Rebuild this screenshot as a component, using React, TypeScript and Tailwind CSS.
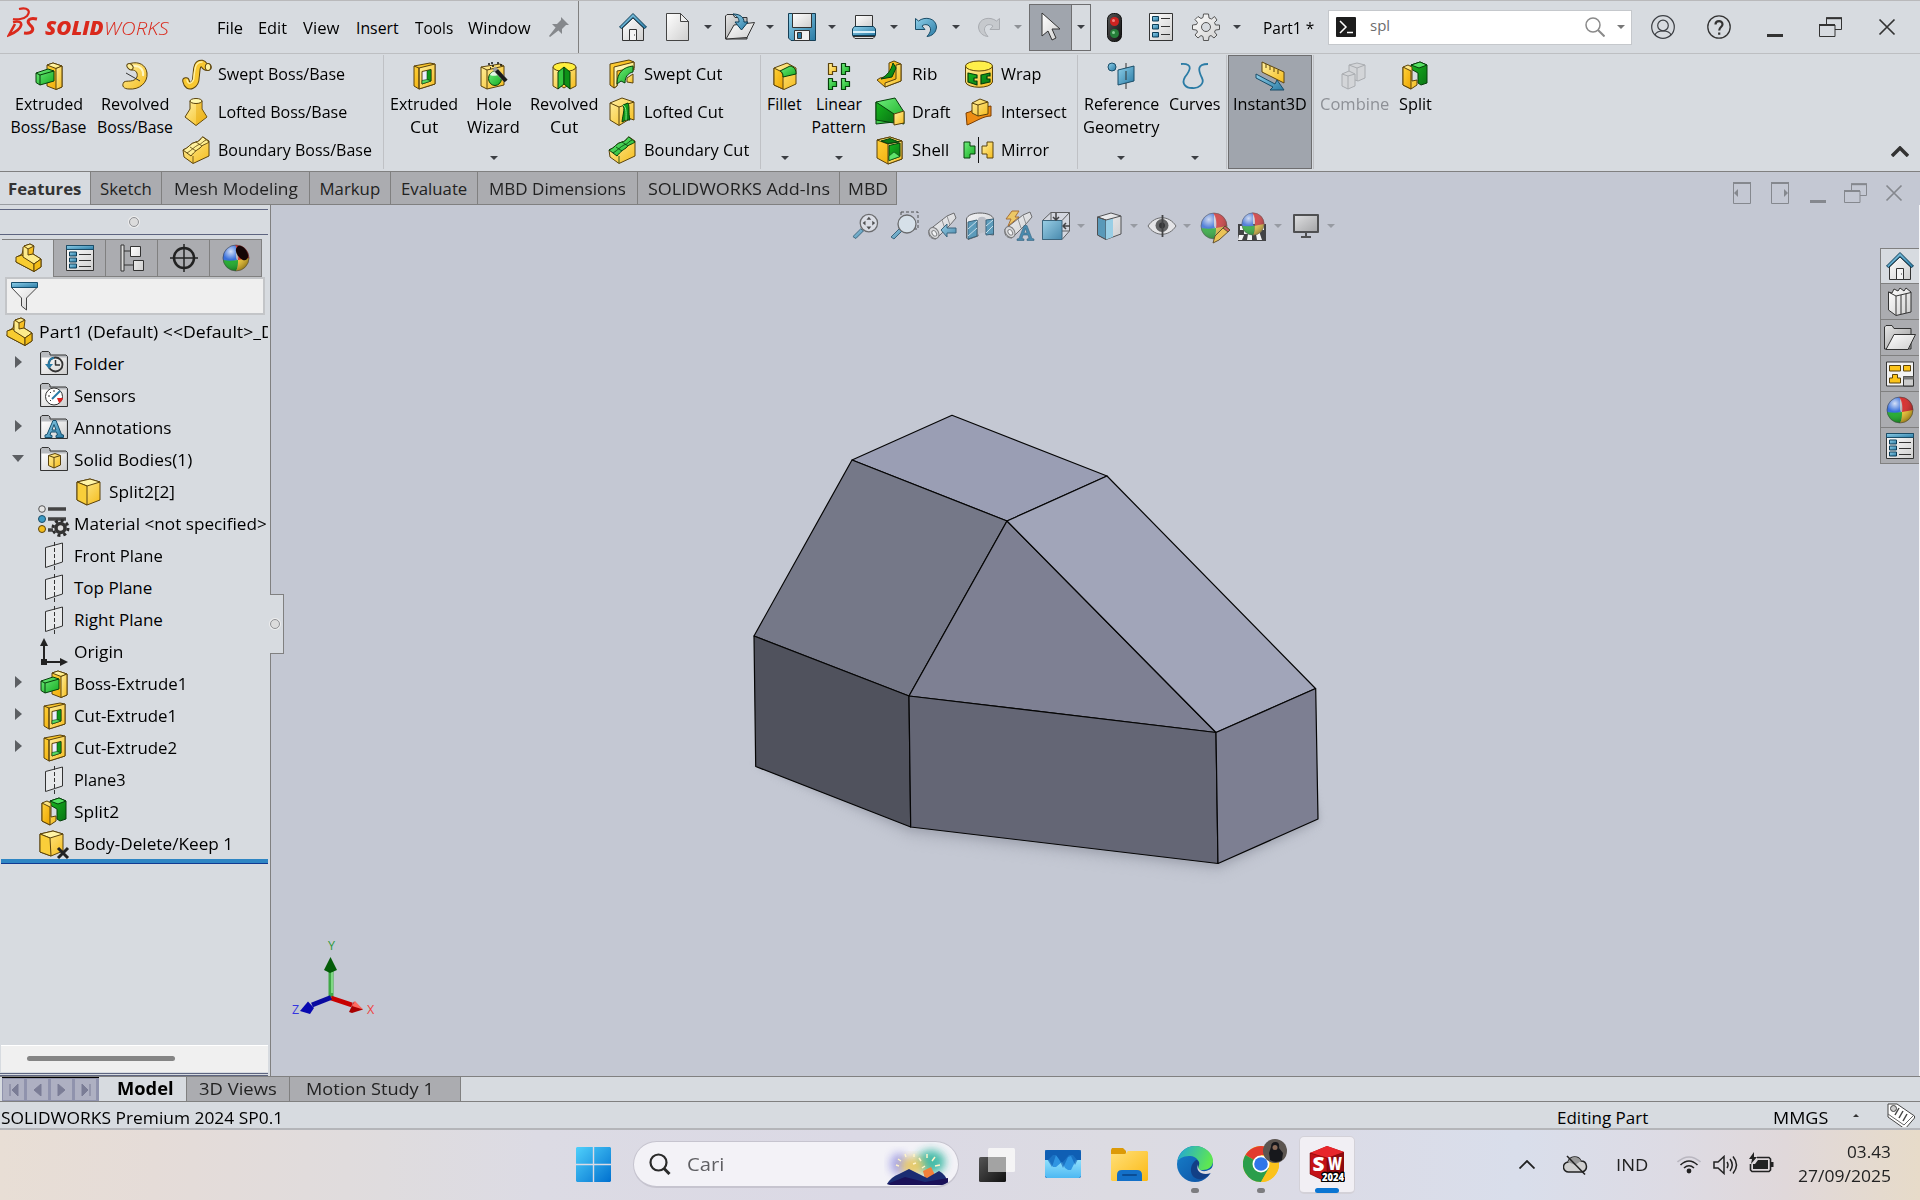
import React, { useLayoutEffect, useRef, useState } from "react";

type Kids = { children?: React.ReactNode };

/* Text set to an exact width, condensed horizontally where needed. */
function T({ w, c = "", children }: Kids & { w: number; c?: string }) {
  const ref = useRef<HTMLSpanElement>(null);
  const [s, setS] = useState(1);
  useLayoutEffect(() => {
    if (ref.current) setS(w / ref.current.offsetWidth);
  }, [w]);
  return (
    <span className={"inline-block shrink-0 whitespace-nowrap text-left " + c} style={{ width: w }}>
      <span ref={ref} className="inline-block origin-left" style={{ transform: `scaleX(${s})` }}>
        {children}
      </span>
    </span>
  );
}

function I({ c = "h-7 w-7", children, vb = "0 0 28 28" }: Kids & { c?: string; vb?: string }) {
  return (
    <svg viewBox={vb} className={"block shrink-0 overflow-visible " + c} fill="none" strokeWidth="1" strokeLinejoin="round">
      {children}
    </svg>
  );
}

function Defs() {
  const g = (id: string, a: string, b: string, x2 = "1", y2 = "1") => (
    <linearGradient id={id} x1="0" y1="0" x2={x2} y2={y2}>
      <stop offset="0" stopColor={a} />
      <stop offset="1" stopColor={b} />
    </linearGradient>
  );
  return (
    <svg className="absolute h-0 w-0">
      <defs>
        {g("gold", "#fff0a0", "#f5bc1c")}
        {g("amber", "#ffd23c", "#eda500")}
        {g("lite", "#fffbd0", "#ffe45a")}
        {g("green", "#6fee7c", "#16ab22")}
        {g("dgreen", "#16b81e", "#0a7414")}
        {g("blue", "#8fd0ea", "#2a7ba5")}
        {g("gray", "#ffffff", "#cfcfcf")}
        {g("dgray", "#e6e6e6", "#9c9c9c")}
        {g("dark", "#555555", "#111111")}
        {g("win", "#4fd0fb", "#0070cf")}
        {g("fold", "#ffe07a", "#fbb914")}
        {g("edgeA", "#1fa5dc", "#5ee653", "1", "0.3")}
        {g("edgeB", "#1782cc", "#0c4da0")}
        {g("sea", "#8fe0fd", "#4db8f2", "0", "1")}
        <radialGradient id="shine" cx="0.3" cy="0.25" r="0.8">
          <stop offset="0" stopColor="#fff" stopOpacity="0.8" />
          <stop offset="0.4" stopColor="#fff" stopOpacity="0.08" />
          <stop offset="1" stopColor="#000" stopOpacity="0.35" />
        </radialGradient>
        <filter id="soft" x="-30%" y="-30%" width="160%" height="160%">
          <feGaussianBlur stdDeviation="4" />
        </filter>
        <filter id="soft2" x="-30%" y="-60%" width="160%" height="220%">
          <feGaussianBlur stdDeviation="7" />
        </filter>
      </defs>
    </svg>
  );
}

const GO = "#5b430c";
const GN = "#063f0b";
const DK = "#333";

const Caret = ({ c = "text-[#3c3f44]" }: { c?: string }) => (
  <svg viewBox="0 0 8 4" className={"block h-1 w-2 shrink-0 " + c}>
    <path d="M0 0H8L4 4Z" fill="currentColor" />
  </svg>
);

/* ---------- feature icons ---------- */
const Extrude = () => (
  <I>
    <path d="M12 3 18 1 27 4V25L21 27.500 12 24Z" fill="url(#amber)" stroke={GO} />
    <path d="M12 3 18 1 27 4 21 6.500Z" fill="url(#lite)" stroke={GO} />
    <path d="M21 6.500 27 4V25L21 27.500Z" fill="url(#gold)" stroke={GO} />
    <path d="M1 11 13 7 19 9V19L5 23 1 20.500Z" fill="url(#green)" stroke={GN} />
    <path d="M1 11 5 13V23M5 13 19 9" stroke={GN} />
  </I>
);
const Revolve = () => (
  <I>
    <path d="M9 1.500C18-1 25 3 26 11 27 21 18 28 8 27 3 27 0 24 3 20 6 18 13 21 16 15 17 11 15 8 11 8 7 7 6 3 9 1.500Z" fill="url(#gold)" stroke={GO} />
    <path d="M12 4C20 3 23 9 22 14" stroke="#fff6c0" strokeWidth="2" />
    <ellipse cx="9" cy="4.700" rx="3.500" ry="2.500" fill="#fff09a" stroke={GO} transform="rotate(45 9 4.700)" />
    <path d="M5 11 19 19" stroke="#333" />
  </I>
);
const Sweep = () => (
  <I>
    <path d="M4 21C6 30 14 25 14 17 15 10 14 3 20 3.500 23 4 22 8 26 7" stroke={GO} strokeWidth="7.500" strokeLinecap="round" />
    <path d="M4 21C6 30 14 25 14 17 15 10 14 3 20 3.500 23 4 22 8 26 7" stroke="#f8c832" strokeWidth="5.500" strokeLinecap="round" />
    <path d="M5 20C6 26 12 23 12 16 13 9 13 2 20 2" stroke="#fff0a0" strokeWidth="1.500" strokeLinecap="round" />
    <ellipse cx="26" cy="7" rx="2.800" ry="3.600" fill="#fff3a5" stroke={GO} />
  </I>
);
const Loft = () => (
  <I>
    <path d="M8 3V11L3 19 14 27.500 25 19 20 11V3Z" fill="url(#gold)" stroke={GO} />
    <path d="M14 6V27L25 19 20 11V3Z" fill="#e0a000" opacity="0.4" />
    <ellipse cx="14" cy="3" rx="6" ry="2.500" fill="#fff9b0" stroke={GO} />
  </I>
);
const Boundary = ({ cut = false }: { cut?: boolean }) => (
  <I>
    <path d="M1 14C7 12 8 7 14 6 19 5 19 1 21 1L27 5V20L11 27.500 2 21Z" fill="url(#gold)" stroke={GO} />
    <path d="M1 14C7 12 8 7 14 6 19 5 19 1 21 1L27 6C23 9 21 8 18 12 15 14 13 15 9 20Z" fill={cut ? "url(#green)" : "url(#lite)"} stroke={cut ? GN : GO} />
    <path d="M5 17C10 14 12 11 16 9 20 8 21 5 24 4M8 11 14 15M14 6 20 10M11 20V27" stroke={cut ? GN : GO} strokeWidth="0.800" />
  </I>
);
const ExtCut = () => (
  <I>
    <path d="M4 4 20 1 25 2V22L9 27 4 24Z" fill="url(#amber)" stroke={GO} />
    <path d="M9 6 25 2V22L9 27Z" fill="url(#gold)" stroke={GO} />
    <path d="M4 4 9 6V27" stroke={GO} />
    <path d="M12 9.500 21 7.500V19L12 22Z" fill="#eef" stroke={GO} />
    <path d="M17 9 21 7.500V19L17 17.500Z" fill="#11991c" stroke={GN} strokeWidth="0.600" />
    <path d="M12 22V18.500L17 17.500 21 19Z" fill="#57d963" stroke={GN} strokeWidth="0.600" />
  </I>
);
const Hole = () => (
  <I>
    <path d="M1 5 20 2 24 4V23L7 27 1 24Z" fill="url(#gold)" stroke={GO} />
    <path d="M1 5 7 8V27M7 8 24 4" stroke={GO} />
    <ellipse cx="15" cy="16.500" rx="6.500" ry="7" fill="url(#green)" stroke={GN} />
    <path d="M10 13C15 15 20 13 19 11 15 8 11 10 10 13Z" fill="#e3f6e5" />
    <path d="M14 6 26 19" stroke="#999" strokeWidth="4.500" />
    <path d="M16.500 8.500 26 19" stroke="#1a1a1a" strokeWidth="4" />
    <path d="M8 2h2M12 0v2M17 1h2M14 4h-2M20 3h2M10 6h1" stroke="#111" strokeWidth="1.500" />
  </I>
);
const RevCut = () => (
  <I>
    <path d="M3 5V24L8 27 11 24 14 26 17 24 20 27 26 24V5Z" fill="url(#gold)" stroke={GO} />
    <ellipse cx="14.500" cy="5" rx="11.500" ry="4.500" fill="#ffef3c" stroke={GO} />
    <path d="M14 5 8 10V27L14 22Z" fill="#35c740" stroke={GN} />
    <path d="M14 5 20 10V27L14 22Z" fill="#0d9118" stroke={GN} />
  </I>
);
const SweptCut = () => (
  <I>
    <path d="M2 4 21 0 26 2V10C18 9 10 14 9 26L6 28 2 25Z" fill="url(#amber)" stroke={GO} />
    <path d="M6 7 26 2V8L9 11V26L6 28Z" fill="url(#lite)" stroke={GO} />
    <path d="M9 24C9 12 16 7 25 6V12C20 13 17 17 17 23L13 21Z" fill="url(#green)" stroke={GN} />
    <path d="M19 18 25 14V23L19 22Z" fill="url(#gold)" stroke={GO} />
  </I>
);
const LoftCut = () => (
  <I>
    <path d="M2 5 14 0 26 4V22L20 20V22L11 27.500 2 22Z" fill="url(#gold)" stroke={GO} />
    <path d="M2 5 11 9V27M11 9 26 4" stroke={GO} />
    <path d="M15 7C17 12 15 15 14 24L18 22 22 22C20 14 22 9 20 5Z" fill="url(#dgreen)" stroke={GN} />
    <path d="M15 7C19 9 18 17 18 22" stroke="#7ff08a" />
  </I>
);
const Fillet = () => (
  <I>
    <path d="M3 6 16 1 25 6V22L13 27.500 3 23Z" fill="url(#gold)" stroke={GO} />
    <path d="M3 6 9 9C12 11 12 15 12 15V27L3 23Z" fill="url(#amber)" stroke={GO} />
    <path d="M9 9 19 4C24 5 25 8 25 12L12 15C12 11 11 10 9 9Z" fill="url(#green)" stroke={GN} />
  </I>
);
const Patt = ({ x, y, f, s }: { x: number; y: number; f: string; s: string }) => (
  <path d={`M${x} ${y}h4v3h4v5h-4v3h-4Z`} fill={f} stroke={s} strokeWidth="1.200" />
);
const Linear = () => (
  <I>
    <Patt x={3.500} y={1.500} f="url(#gold)" s={GO} />
    <Patt x={16.500} y={1.500} f="url(#green)" s={GN} />
    <Patt x={3.500} y={16.500} f="url(#green)" s={GN} />
    <Patt x={16.500} y={16.500} f="url(#green)" s={GN} />
  </I>
);
const Rib = () => (
  <I>
    <path d="M13 3 18 1 25 4V21L9 27 1 20 4 18 13 16Z" fill="url(#amber)" stroke={GO} />
    <path d="M20 5 25 4V21L9 27V23L20 19Z" fill="url(#gold)" stroke={GO} />
    <path d="M17 3C15 11 11 15 5 19L16 17 20 8Z" fill="url(#dgreen)" stroke={GN} />
  </I>
);
const Draft = () => (
  <I>
    <path d="M0 4 19 0 28 14V26L18 24 0 26Z" fill="url(#green)" stroke={GN} />
    <path d="M0 4 18 16V25L0 22Z" fill="url(#dgreen)" stroke={GN} />
    <path d="M18 16 28 13V25L18 27Z" fill="url(#gold)" stroke={GO} />
  </I>
);
const Shell = () => (
  <I>
    <path d="M1 4 14 1 26 5V23L12 28 1 22Z" fill="url(#amber)" stroke={GO} />
    <path d="M1 4 12 8 26 5 14 1Z" fill="#ffe873" stroke={GO} />
    <path d="M12 8 26 5V23L12 28Z" fill="url(#gold)" stroke={GO} />
    <path d="M5 5 14 2.500 23 6 12 7.500Z" fill="#0b7a15" stroke={GN} />
    <path d="M13 9.500 24 7V20.500L13 24.500Z" fill="url(#dgreen)" stroke={GN} />
    <path d="M13 24.500V20L18 16 24 20.500Z" fill="#5fe46b" stroke={GN} strokeWidth="0.600" />
  </I>
);
const Wrap = () => (
  <I>
    <path d="M0.500 6V22C2 29 26 29 27.500 22V6Z" fill="url(#gold)" stroke={GO} />
    <ellipse cx="14" cy="6" rx="13.500" ry="5" fill="#ffef4a" stroke={GO} />
    <path d="M3 13 12 15V18H9V21H12V25L3 22ZM25 13 16 15V24L25 22V19H22V16H25Z" fill="url(#dgreen)" stroke={GN} strokeWidth="1.200" />
  </I>
);
const Intersect = () => (
  <I>
    <path d="M1 15C7 14 9 10 14 10L26 8V18C18 18 10 24 2 27Z" fill="#ee8c14" stroke="#7a3c00" />
    <path d="M7 5 15 1 23 4V16L13 18 7 15Z" fill="url(#gold)" stroke={GO} />
    <path d="M7 5 13 7V18M13 7 23 4" stroke={GO} />
  </I>
);
const Mirror = () => (
  <I>
    <path d="M-1 6H5V10H10V18H5V22H-1Z" fill="url(#green)" stroke={GN} />
    <path d="M28 6H22V10H17V18H22V22H28Z" fill="url(#gold)" stroke={GO} />
    <path d="M13.500 1V27" stroke="#111" />
  </I>
);
const RefGeo = () => (
  <I>
    <circle cx="5" cy="5" r="4" fill="url(#blue)" stroke="#1b4d68" />
    <path d="M11 8 27 4V19L11 23Z" fill="url(#blue)" stroke="#1b4d68" />
    <path d="M19 1V6M19 9V18M19 21V27" stroke="#333" />
  </I>
);
const Curves = () => (
  <I>
    <path d="M0 2C14 1 8 10 4 15 0 22 5 26 11 26 17 27 24 22 21 16 17 8 16 2 27 2" stroke="#2a7ba5" strokeWidth="1.800" />
  </I>
);
const Instant = () => (
  <I>
    <path d="M6 0 28 10V21L6 10Z" fill="url(#gold)" stroke={GO} />
    <path d="M10 2v4M14 4v4M18 6v4M22 8v4" stroke={GO} />
    <path d="M0 12 19 22 21 18 28 28 14 28 17 25 0 16Z" fill="url(#blue)" stroke="#1b4d68" />
  </I>
);
const Combine = () => (
  <I>
    <g fill="#d3d5d8" stroke="#a9acb0">
      <path d="M9 3 17 1 25 3V16L18 19 9 16Z" />
      <path d="M9 3 17 6 25 3M17 6V19" />
      <path d="M2 12 9 9 15 12V24L8 27 2 24Z" />
      <path d="M2 12 8 14 15 12M8 14V27" />
    </g>
  </I>
);
const SplitI = () => (
  <I>
    <path d="M10 3 19 0 26 3V21L20 23 17 21V11L10 7Z" fill="url(#dgreen)" stroke={GN} />
    <path d="M10 3 19 0 26 3 18 6Z" fill="#55e062" stroke={GN} />
    <path d="M2 5 7 3 11 5V19L16 18V23L10 27 2 23Z" fill="url(#gold)" stroke={GO} />
    <path d="M2 5 10 9V27L2 23Z" fill="url(#amber)" stroke={GO} />
  </I>
);

/* ---------- general icons ---------- */
const House = () => (
  <I>
    <path d="M3.500 15 14 5 24.500 15V27.500H3.500Z" fill="url(#gray)" stroke={DK} />
    <rect x="10.500" y="16.500" width="7" height="11" stroke={DK} fill="#f4f4f4" />
    <path d="M15 22h1" stroke={DK} />
    <path d="M0.500 14 14 0.500 27.500 14 25.500 15.500 14 4.500 2.500 15.500Z" fill="url(#blue)" stroke="#0d3d57" />
  </I>
);
const PropList = ({ top = true }: { top?: boolean }) => (
  <I>
    <rect x="0.500" y="1.500" width="27" height="25" fill="url(#gray)" stroke={DK} />
    {top && <rect x="0.500" y="1.500" width="27" height="4" fill="url(#blue)" stroke="#1b4d68" />}
    {[8, 14, 20].map((y) => (
      <g key={y}>
        <rect x="3.500" y={y} width="7" height="4" fill="url(#blue)" stroke="#0d3d57" />
        <path d={`M13 ${y + 2.500}H25`} stroke={DK} />
      </g>
    ))}
  </I>
);
const Sphere = ({ c = "h-7 w-7" }: { c?: string }) => (
  <I c={c}>
    <path d="M14 14V1A13 13 0 0 0 1 16C5 18 10 18 15 16Z" fill="#2763d8" />
    <path d="M13 1C16 5 17 11 16 16H27A13 13 0 0 0 13 1Z" fill="#d5201f" />
    <path d="M1 16C6 17 11 17 16 16 16 20 16 24 14 27A13 13 0 0 1 1 16Z" fill="#12a81f" />
    <path d="M16 16 27 14A13 13 0 0 1 14 27C16 24 16 20 16 16Z" fill="#f0c427" />
    <circle cx="14" cy="14" r="13" fill="url(#shine)" stroke="#444" strokeWidth="0.600" />
  </I>
);
const PartI = () => (
  <I>
    <path d="M3 13 8 10 10 2 16 0 20 2 19 10 27 15V23L20 27.500 2 18Z" fill="url(#amber)" stroke={GO} />
    <path d="M2 13 8 11 20 20V27.500L2 18Z" fill="#f8cc30" stroke={GO} />
    <path d="M10 2 16 0 20 2 14 5ZM14 5V11L19 10 27 15 20 20 9 13V3" fill="#fdeb8b" stroke={GO} />
    <path d="M20 20 27 15V23L20 27.500Z" fill="#f2bc16" stroke={GO} />
  </I>
);
const Cube = () => (
  <I>
    <path d="M2 4 15 1 25 4V22L12 27 2 22Z" fill="url(#gold)" stroke={GO} />
    <path d="M2 4 12 8 25 4 15 1Z" fill="#fff4a6" stroke={GO} />
    <path d="M2 4 12 8V27L2 22Z" fill="#f9ce3a" stroke={GO} />
  </I>
);
const CubeX = () => (
  <I>
    <path d="M0 4 13 1 23 4V21L11 26 0 22Z" fill="url(#gold)" stroke={GO} />
    <path d="M0 4 10 8 23 4 13 1Z" fill="#fff4a6" stroke={GO} />
    <path d="M0 4 10 8 11 26 0 22Z" fill="#f9ce3a" stroke={GO} />
    <path d="M18 18 28 28M28 18 18 28" stroke="#222" strokeWidth="3" />
  </I>
);
const FolderBox = ({ children }: Kids) => (
  <I>
    <path d="M0.500 6V3L2 1.500H8.500L10 3V5H26L27.500 6.500V24.500H0.500Z" fill="#b9bcc0" stroke={DK} />
    <path d="M1.500 7.500H26.500V24H1.500Z" fill="url(#gray)" />
    {children}
  </I>
);
const Plane = () => (
  <I>
    <path d="M5.500 5.500 22.500 1V20L5.500 25.500Z" fill="#e7e9eb" stroke={DK} />
    <path d="M14.500 0V28" stroke={DK} strokeDasharray="4 2" />
  </I>
);
const Material = () => (
  <I>
    <circle cx="2" cy="-1" r="3.300" fill="#e4e4e4" stroke="#555" />
    <circle cx="2" cy="9" r="3.500" fill="#3c9ac4" stroke="#1b4d68" />
    <circle cx="2" cy="19" r="3.500" fill="#f4bd1b" stroke={GO} />
    <path d="M8 -1H26M8 9H26M8 20H13" stroke="#444" strokeWidth="3.500" />
    <circle cx="20.500" cy="18" r="7.500" stroke="#2c2c2c" strokeWidth="3" strokeDasharray="3 2.890" />
    <circle cx="20.500" cy="18" r="4.500" stroke="#333" strokeWidth="3.500" fill="#ddd" />
  </I>
);
const Origin = () => (
  <I>
    <path d="M4 24V6M4 24H22" stroke="#222" strokeWidth="2" />
    <path d="M4 0 8 8H0ZM28 24 20 28V20ZM1 21H7V27H1Z" fill="#222" />
  </I>
);
const OpenFolder = () => (
  <I c="h-7 w-8" vb="0 0 32 28">
    <path d="M0.500 25V3L2 1.500H8L10 4.500H27V25Z" fill="url(#dgray)" stroke={DK} />
    <path d="M2 25.500 10 10.500H31.500L24 25.500Z" fill="url(#gray)" stroke={DK} />
  </I>
);
const Restore = ({ c }: { c: string }) => (
  <I c={"h-5 w-[23px] " + c} vb="0 0 23 20">
    <path d="M7.500 7V1H22.500V12.500H16" stroke="currentColor" />
    <path d="M7 1.200H23" stroke="currentColor" strokeWidth="2" />
    <rect x="0.500" y="8" width="15.500" height="11.500" stroke="currentColor" />
    <path d="M0 8H16" stroke="currentColor" strokeWidth="2" />
  </I>
);
const Cross = ({ c }: { c: string }) => (
  <I c={"h-4 w-4 " + c} vb="0 0 16 16">
    <path d="M0.500 0.500 15.500 15.500M15.500 0.500 0.500 15.500" stroke="currentColor" strokeWidth="1.700" />
  </I>
);
const Scope = () => (
  <>
    <path d="M1 18 19 4 26 1 28 6 22 13 8 27C2 27 0 23 1 18Z" fill="url(#gray)" stroke="#555" />
    <path d="M19 4 22 13M14 8 17 17" stroke="#888" />
    <ellipse cx="6" cy="21" rx="4.500" ry="6" transform="rotate(-35 6 21)" fill="#ddd" stroke="#666" />
    <ellipse cx="6" cy="21.500" rx="2" ry="3" transform="rotate(-35 6 21)" fill="#fff" stroke="#777" />
  </>
);

/* ---------- title bar ---------- */
function TitleBar() {
  const menu: [string, number, string][] = [
    ["File", 26, "ml-[48px] mt-[2px]"],
    ["Edit", 29, "ml-[15px] mt-[2px]"],
    ["View", 37, "ml-[16px] mt-[2px]"],
    ["Insert", 43, "ml-[16px] mt-[2px]"],
    ["Tools", 38, "ml-[16px] mt-[2px]"],
    ["Window", 63, "ml-[15px] mt-[2px]"],
  ];
  return (
    <header className="flex h-[54px] items-center border-t border-b border-t-[#b9b9bb] border-b-[#bdbfc2] bg-[#d7dbe0]">
      <svg viewBox="0 0 32 32" className="ml-[7px] h-8 w-8 shrink-0 -mt-2" fill="none" stroke="#da291c" strokeWidth="2.600">
        <path d="M12 2C21 0 24 4 20 9 17 12 10 13 6 12" strokeWidth="2.200" />
        <path d="M6 15C18 12 17 22 2 28L8 17" />
        <path d="M30 12C22 10 19 14 23 18 28 22 26 27 17 26" strokeWidth="3" />
      </svg>
      <div className="mt-px ml-[6px] flex items-baseline text-[18.500px] italic text-[#da291c]">
        <T w={59} c="font-extrabold">SOLID</T>
        <T w={65} c="font-light">WORKS</T>
      </div>
      {menu.map(([t, w, m]) => (
        <T key={t} w={w} c={m}>{t}</T>
      ))}
      <svg viewBox="0 0 20 20" className="ml-[18px] h-5 w-5 shrink-0">
        <path d="M12 0 20 8 17 8 13 12 13 17 3 7 8 7 12 3ZM7 10 10 13 1 20 0 19Z" fill="#85888c" />
      </svg>
      <div className="ml-[9px] h-full w-px shrink-0 bg-[#808080]" />

      <div className="ml-[40px]"><House /></div>
      <div className="ml-[19px]">
        <I c="h-7 w-[23px]" vb="0 0 23 28">
          <path d="M0.500 0.500H14.500L22.500 8.500V27.500H0.500Z" fill="url(#gray)" stroke="#444" />
          <path d="M14.500 0.500V8.500H22.500Z" fill="#eee" stroke="#444" />
        </I>
      </div>
      <div className="ml-[15px]"><Caret /></div>
      <div className="ml-[13px]">
        <I c="h-7 w-[30px]" vb="0 0 30 28">
          <path d="M0.500 26V3L2 1.500H8L10 4.500H22V26Z" fill="url(#dgray)" stroke={DK} />
          <path d="M1 26 9 12 29.500 9.500 22 24.500Z" fill="url(#gray)" stroke={DK} />
          <path d="M8 1C16 1 19 5 19 9H23L16.500 17 10 9H14C14 5 12 3 8 1Z" fill="url(#blue)" stroke="#0d3d57" />
        </I>
      </div>
      <div className="ml-[11px]"><Caret /></div>
      <div className="ml-[14px]">
        <I>
          <path d="M0.500 0.500H27.500V27.500H3L0.500 25Z" fill="url(#blue)" stroke="#153f56" />
          <rect x="4.500" y="0.500" width="19" height="14" fill="url(#gray)" stroke={DK} />
          <rect x="6.500" y="17.500" width="15" height="10" fill="#f0f0f0" stroke={DK} />
          <rect x="9.500" y="19.500" width="4" height="6" fill="#2a7ba5" stroke={DK} />
        </I>
      </div>
      <div className="ml-[12px]"><Caret /></div>
      <div className="ml-[16px]">
        <I c="h-6 w-6" vb="0 0 24 24">
          <path d="M3.500 12V0.500H20.500V12Z" fill="url(#gray)" stroke={DK} />
          <path d="M2.500 11.500H21.500L23.500 14V20.500H0.500V14Z" fill="url(#blue)" stroke="#0d3d57" />
          <path d="M1 17H23" stroke="#d7eef8" strokeWidth="2" />
          <path d="M1 21.500H23L21 23.500H3Z" fill="#ddd" stroke={DK} />
        </I>
      </div>
      <div className="ml-[14px]"><Caret /></div>
      <div className="ml-[17px]">
        <I c="h-5 w-[22px]" vb="0 0 22 20">
          <path d="M0.500 1.500 3.500 4C10-1 21 1 21.500 10 21 16 17 19 12 19.500 16 15 17 11 13 8 10 7 8 8 7 9L10 12.500H0.500Z" fill="url(#blue)" stroke="#1b4d68" />
        </I>
      </div>
      <div className="ml-[15px]"><Caret /></div>
      <div className="ml-[18px] -scale-x-100">
        <I c="h-5 w-[22px]" vb="0 0 22 20">
          <path d="M0.500 1.500 3.500 4C10-1 21 1 21.500 10 21 16 17 19 12 19.500 16 15 17 11 13 8 10 7 8 8 7 9L10 12.500H0.500Z" fill="#c6c9cd" stroke="#a8abb0" />
        </I>
      </div>
      <div className="ml-[14px]"><Caret c="text-[#8e9196]" /></div>
      <div className="ml-[7px] flex h-[47px] w-[62px] shrink-0 border border-[#6e6e70]">
        <div className="flex w-[42px] items-center justify-center border-r border-[#6e6e70] bg-[#a0a5ad]">
          <I c="h-7 w-5" vb="0 0 20 28">
            <path d="M1 0V23L7 18 11 27 15 25 11 16H19Z" fill="url(#gray)" stroke="#333" />
          </I>
        </div>
        <div className="flex flex-1 items-center justify-center"><Caret /></div>
      </div>
      <div className="ml-[16px]">
        <I c="h-[29px] w-[15px]" vb="0 0 15 29">
          <rect x="0.500" y="0.500" width="14" height="28" rx="6" fill="url(#dark)" stroke="#111" />
          <circle cx="7.500" cy="8.500" r="4.500" fill="#cf2320" />
          <circle cx="7.500" cy="20.500" r="4.500" fill="#26803a" />
          <circle cx="6.500" cy="7.500" r="1.500" fill="#f3837f" />
          <circle cx="6.500" cy="19.500" r="1.500" fill="#88cf96" />
        </I>
      </div>
      <div className="ml-[27px]">
        <I c="h-7 w-6" vb="0 0 24 28">
          <rect x="0.500" y="0.500" width="23" height="27" fill="url(#gray)" stroke={DK} />
          {[3.500, 11.500, 19.500].map((y) => (
            <g key={y}>
              <rect x="3.500" y={y} width="6" height="4.500" fill="url(#blue)" stroke="#0d3d57" />
              <path d={`M12 ${y + 2}H21`} stroke={DK} />
            </g>
          ))}
        </I>
      </div>
      <div className="ml-[19px]">
        <I>
          <path
            d="M11.500 1H16.500L17 5 19.500 6 22.500 3.500 25 7 22.500 9.500 23.500 12 27.500 12V16.500L23.500 17 22.500 19 25 22 22 25 19 22.500 17 23.500 16.500 27.500H11.500L11 23.500 9 22.500 6 25 3 22 5.500 19 4.500 17 0.500 16.500V12L4.500 11.500 5.500 9.500 3 6.500 6 3.500 9 5.500 11 4.500Z"
            fill="url(#gray)"
            stroke="#555"
          />
          <circle cx="14" cy="14" r="4.500" fill="#d7dbe0" stroke="#555" />
        </I>
      </div>
      <div className="ml-[13px]"><Caret /></div>
      <T w={51} c="ml-[22px] mt-px">Part1 *</T>
      <div className="ml-[14px] flex h-[35px] w-[304px] shrink-0 items-center border border-[#c5c8cc] bg-white">
        <svg viewBox="0 0 20 20" className="ml-[7px] h-5 w-5 shrink-0">
          <rect width="20" height="20" rx="1" fill="#1d1d1d" />
          <path d="M4 4 10 10 4 16M11 15.500H17" stroke="#fff" strokeWidth="1.500" fill="none" />
        </svg>
        <T w={20} c="ml-[14px] -mt-1 text-[15px] text-[#6d6d6d]">spl</T>
        <svg viewBox="0 0 20 20" className="ml-[195px] h-5 w-5 shrink-0" fill="none" stroke="#8a8a8a" strokeWidth="1.500">
          <circle cx="8" cy="8" r="7" />
          <path d="M13 13 19.500 19.500" strokeWidth="2" />
        </svg>
        <div className="ml-[12px]"><Caret c="text-[#777]" /></div>
      </div>
      <svg viewBox="0 0 24 24" className="ml-[19px] h-6 w-6 shrink-0" fill="none" stroke="#3c3f44" strokeWidth="1.200">
        <circle cx="12" cy="12" r="11.300" />
        <circle cx="12" cy="10.500" r="5.300" />
        <path d="M4 20C5 17 8 16 12 16 16 16 19 17 20 20" />
      </svg>
      <svg viewBox="0 0 24 24" className="ml-[32px] h-6 w-6 shrink-0" fill="none" stroke="#333" strokeWidth="1.300">
        <circle cx="12" cy="12" r="11.200" />
        <path d="M8.500 9.500C8.500 5 15.500 5 15.500 9.200 15.500 12 12.200 12 12.200 15.500M12.200 17.500V19.700" strokeWidth="2.200" />
      </svg>
      <div className="mt-[17px] ml-[36px] h-[3px] w-4 shrink-0 bg-[#333]" />
      <div className="ml-[36px]"><Restore c="text-[#333]" /></div>
      <div className="ml-[37px]"><Cross c="text-[#333]" /></div>
    </header>
  );
}

/* ---------- ribbon ---------- */
type Line = [string, number];
function Big({ icon, lines, w, caret, c = "" }: { icon: React.ReactNode; lines: Line[]; w: string; caret?: boolean; c?: string }) {
  return (
    <div className={"flex h-[115px] shrink-0 flex-col items-center pt-[7px] leading-[23px] " + w + " " + c}>
      {icon}
      <div className="mt-[3px] flex h-[63px] flex-col items-center">
        {lines.map(([t, n]) => (
          <T key={t} w={n} c="h-[23px]">{t}</T>
        ))}
      </div>
      {caret && <Caret />}
    </div>
  );
}
function SmallCol({ items, w }: { items: [React.ReactNode, string, number][]; w: string }) {
  return (
    <div className={"shrink-0 " + w}>
      {items.map(([ic, t, n]) => (
        <div key={t} className="flex h-[38px] items-center">
          <div className="flex w-9 justify-center">{ic}</div>
          <T w={n} c="ml-1 leading-[22px]">{t}</T>
        </div>
      ))}
    </div>
  );
}
const Sep = ({ c = "" }: { c?: string }) => <div className={"h-[114px] w-px shrink-0 bg-[#bfc1c5] " + c} />;

function Ribbon() {
  return (
    <div className="relative flex h-[118px] border-b border-[#808080] bg-[#d7dbe0] pt-px">
      <Big icon={<Extrude />} lines={[["Extruded", 68], ["Boss/Base", 76]]} w="w-[87px]" c="ml-[5px]" />
      <Big icon={<Revolve />} lines={[["Revolved", 68], ["Boss/Base", 76]]} w="w-[86px]" />
      <SmallCol w="w-[205px]" items={[[<Sweep />, "Swept Boss/Base", 127], [<Loft />, "Lofted Boss/Base", 129], [<Boundary />, "Boundary Boss/Base", 154]]} />
      <Sep />
      <Big icon={<ExtCut />} lines={[["Extruded", 68], ["Cut", 28]]} w="w-[79px]" />
      <Big icon={<Hole />} lines={[["Hole", 36], ["Wizard", 53]]} w="w-[61px]" caret />
      <Big icon={<RevCut />} lines={[["Revolved", 68], ["Cut", 28]]} w="w-[80px]" />
      <SmallCol w="w-[156px]" items={[[<SweptCut />, "Swept Cut", 78], [<LoftCut />, "Lofted Cut", 80], [<Boundary cut />, "Boundary Cut", 105]]} />
      <Sep />
      <Big icon={<Fillet />} lines={[["Fillet", 35]]} w="w-[47px]" caret />
      <Big icon={<Linear />} lines={[["Linear", 46], ["Pattern", 55]]} w="w-[62px]" caret />
      <SmallCol w="ml-[2px] w-[89px]" items={[[<Rib />, "Rib", 25], [<Draft />, "Draft", 39], [<Shell />, "Shell", 37]]} />
      <SmallCol w="w-[116px]" items={[[<Wrap />, "Wrap", 41], [<Intersect />, "Intersect", 66], [<Mirror />, "Mirror", 48]]} />
      <Sep />
      <Big icon={<RefGeo />} lines={[["Reference", 75], ["Geometry", 76]]} w="w-[86px]" caret />
      <Big icon={<Curves />} lines={[["Curves", 51]]} w="w-[61px]" caret />
      <Sep c="ml-px" />
      <div className="ml-px h-[114px] border border-[#6e6e70] bg-[#a0a5ad]">
        <Big icon={<Instant />} lines={[["Instant3D", 74]]} w="w-[82px]" c="-mt-px" />
      </div>
      <Sep c="ml-px" />
      <Big icon={<Combine />} lines={[["Combine", 69]]} w="w-[80px]" c="text-[#8d9096]" />
      <Big icon={<SplitI />} lines={[["Split", 33]]} w="w-[42px]" />
      <svg viewBox="0 0 18 11" className="mt-[91px] mr-[11px] ml-auto h-[11px] w-[18px]" fill="none" stroke="#333" strokeWidth="3.500">
        <path d="M1 10 9 2 17 10" />
      </svg>
    </div>
  );
}

function TabRow() {
  const tabs: [string, number, string][] = [
    ["Sketch", 52, "w-[71px]"],
    ["Mesh Modeling", 124, "w-[148px]"],
    ["Markup", 61, "w-[81px]"],
    ["Evaluate", 66, "w-[87px]"],
    ["MBD Dimensions", 137, "w-[160px]"],
    ["SOLIDWORKS Add-Ins", 182, "w-[202px]"],
    ["MBD", 40, "w-[57px]"],
  ];
  return (
    <div className="flex h-[33px] bg-[#c4c8d3] text-[16.800px] text-[#222]">
      <div className="-mt-px flex w-[90px] shrink-0 items-center border-b border-[#9a9da2] bg-[#d7dbe0] pt-[2px] pl-[8px] font-bold text-[#333]">
        <T w={73}>Features</T>
      </div>
      <div className="flex border-l border-[#808080]">
        {tabs.map(([t, n, w]) => (
          <div key={t} className={"flex shrink-0 items-center justify-center border-r border-b border-[#808080] bg-[#abacb0] pt-px " + w}>
            <T w={n}>{t}</T>
          </div>
        ))}
      </div>
      <div className="mt-[10px] mr-[18px] ml-auto flex items-start text-[#85888e]">
        <I c="h-[22px] w-[18px]" vb="0 0 18 22">
          <rect x="0.500" y="1" width="17" height="20.500" stroke="currentColor" />
          <path d="M0 1H18" stroke="currentColor" strokeWidth="2" />
          <path d="M5 7V15L1 11Z" fill="currentColor" />
        </I>
        <I c="ml-5 h-[22px] w-[18px]" vb="0 0 18 22">
          <rect x="0.500" y="1" width="17" height="20.500" stroke="currentColor" />
          <path d="M0 1H18" stroke="currentColor" strokeWidth="2" />
          <path d="M13 7V15L17 11Z" fill="currentColor" />
        </I>
        <div className="mt-[18px] ml-[21px] h-[3px] w-4 bg-[#85888e]" />
        <div className="mt-px ml-[18px]"><Restore c="text-[#85888e]" /></div>
        <div className="mt-[3px] ml-[19px]"><Cross c="text-[#85888e]" /></div>
      </div>
    </div>
  );
}

/* ---------- feature tree ---------- */
type Node = { t: string; w: number; i: React.ReactNode; a?: "r" | "d"; deep?: boolean };
const nodes: Node[] = [
  {
    t: "Folder", w: 50, a: "r",
    i: (
      <FolderBox>
        <circle cx="15.500" cy="14.500" r="7" stroke="#333" strokeWidth="1.800" />
        <path d="M15.500 10V15H20" stroke="#333" strokeWidth="1.500" />
        <path d="M5 14H13L9 19Z" fill="#2a7ba5" />
        <path d="M9 14C9 10 11 8 14 8" stroke="#2a7ba5" strokeWidth="2" />
      </FolderBox>
    ),
  },
  {
    t: "Sensors", w: 62,
    i: (
      <FolderBox>
        <circle cx="14" cy="14.500" r="8.500" fill="#fff" stroke="#333" />
        <path d="M12 17 20 9" stroke="#2a7ba5" strokeWidth="2" />
        <path d="M17 16H23C22 19 21 20 19 21Z" fill="#e02222" />
        <path d="M14 8V10M8 14H10M10 10 11 11M10 19 11 18" stroke="#333" />
      </FolderBox>
    ),
  },
  {
    t: "Annotations", w: 97, a: "r",
    i: (
      <FolderBox>
        <path d="M5 22.500V21L7 20.500 13 6.500H16L21.500 20.500 23.500 21V23.500H16V21.500L17.500 21 16.500 18H11L10 21 12 21.500V23.500H5ZM12 16H16L14 10.500Z" fill="url(#blue)" stroke="#164f6d" />
      </FolderBox>
    ),
  },
  {
    t: "Solid Bodies(1)", w: 118, a: "d",
    i: (
      <FolderBox>
        <path d="M8.500 9.500 15 7.500 20.500 9.500V19L14 22 8.500 19.500Z" fill="url(#gold)" stroke={GO} />
        <path d="M8.500 9.500 14 11.500V22M14 11.500 20.500 9.500" stroke={GO} />
      </FolderBox>
    ),
  },
  { t: "Split2[2]", w: 66, i: <Cube />, deep: true },
  { t: "Material <not specified>", w: 193, i: <Material /> },
  { t: "Front Plane", w: 89, i: <Plane /> },
  { t: "Top Plane", w: 78, i: <Plane /> },
  { t: "Right Plane", w: 89, i: <Plane /> },
  { t: "Origin", w: 49, i: <Origin /> },
  { t: "Boss-Extrude1", w: 113, a: "r", i: <Extrude /> },
  { t: "Cut-Extrude1", w: 103, a: "r", i: <ExtCut /> },
  { t: "Cut-Extrude2", w: 103, a: "r", i: <ExtCut /> },
  { t: "Plane3", w: 52, i: <Plane /> },
  { t: "Split2", w: 45, i: <SplitI /> },
  { t: "Body-Delete/Keep 1", w: 159, i: <CubeX /> },
];

function TreePanel() {
  return (
    <aside className="relative z-10 flex h-[871px] w-[271px] shrink-0 flex-col border-r border-[#808080] bg-[#d7dbe0] text-[17px]">
      <div className="mt-[4px] flex h-[26px] w-[268px] items-center justify-center border-t border-b border-[#5d6480]">
        <div className="h-[10px] w-[10px] rounded-full border border-[#8f9195] bg-[#dcdcdc] shadow-[0_0_0_1px_#eee]" />
      </div>
      <div className="mt-[4px] ml-[2px] flex h-[38px] w-[260px] border-t border-[#808080]">
        <div className="flex w-[51px] items-center justify-center pb-[2px]"><PartI /></div>
        {[
          <PropList />,
          <I>
            <path d="M3 1H6V27H3Z" fill="#ddd" stroke={DK} />
            <path d="M6 7H12M6 21H15" stroke={DK} />
            <path d="M12.500 2.500H22.500V12.500H12.500ZM15.500 16.500H25.500V26.500H15.500Z" fill="url(#gray)" stroke={DK} />
          </I>,
          <I>
            <circle cx="14" cy="14" r="10" stroke="#222" strokeWidth="2.500" />
            <path d="M14 0V28M0 14H28" stroke="#222" strokeWidth="1.500" />
          </I>,
          <I>
            <g><Sphere /></g>
            <ellipse cx="20" cy="9" rx="5" ry="8" transform="rotate(-35 20 9)" fill="#150505" />
          </I>,
        ].map((ic, k) => (
          <div key={k} className="flex w-[52px] items-center justify-center border-b border-l border-[#808080] bg-[#abacb0] last:w-[53px] last:border-r">{ic}</div>
        ))}
      </div>
      <div className="ml-[5px] flex h-[38px] w-[260px] items-center border-2 border-[#c3c5c8] bg-[#efefef]">
        <I c="ml-[4px] h-[29px] w-[27px]" vb="0 0 27 29">
          <path d="M0.500 5.500 10.500 16V24L15.500 28V16L26 5.500Z" fill="url(#gray)" stroke="#444" />
          <rect x="0.500" y="0.500" width="26" height="5" fill="url(#blue)" stroke="#164f6d" />
        </I>
      </div>
      <div className="mt-[1px] flex h-8 w-[268px] items-center overflow-hidden pl-[5px]">
        <PartI />
        <T w={235} c="ml-[6px]">{"Part1 (Default) <<Default>_D"}</T>
      </div>
      {nodes.map((n) => (
        <div key={n.t} className="flex h-8 w-[268px] shrink-0 items-center">
          <div className={n.deep ? "w-[75px] shrink-0" : "w-[40px] shrink-0"}>
            {n.a === "r" && (
              <svg viewBox="0 0 7 12" className="-mt-1 ml-[15px] h-3 w-[7px]"><path d="M0 0 7 6 0 12Z" fill="#5c5f63" /></svg>
            )}
            {n.a === "d" && (
              <svg viewBox="0 0 12 7" className="-mt-1 ml-[12px] h-[7px] w-3"><path d="M0 0H12L6 7Z" fill="#5c5f63" /></svg>
            )}
          </div>
          {n.i}
          <T w={n.w} c="ml-[6px]">{n.t}</T>
        </div>
      ))}
      <div className="-mt-px ml-px h-[5px] w-[267px] shrink-0 border-b border-[#103a92] bg-[#2e86c4]" />
      <div className="mt-auto ml-px h-[27px] w-[267px] border-t border-white bg-[#f0f0f0] pt-[10px]">
        <div className="ml-[26px] h-[5px] w-[148px] rounded-full bg-[#858585]" />
      </div>
      <div className="mt-[1px] h-[3px] w-[268px] border-t border-b border-[#5d6480]" />
      <div className="absolute top-[389px] left-[270px] flex h-[60px] w-[14px] items-center border border-l-0 border-[#808080] bg-[#d7dbe0]">
        <div className="h-[10px] w-[10px] rounded-full border border-[#8f9195] bg-[#dcdcdc] shadow-[0_0_0_1px_#eee]" />
      </div>
    </aside>
  );
}

/* ---------- viewport ---------- */
function HeadsUp() {
  const C = () => <Caret c="text-[#8d9097]" />;
  return (
    <div className="relative flex h-[30px] items-center pl-[581px] opacity-80">
      <I c="h-7 w-[27px]">
        <path d="M1 25 9 17 12 19 4 27Z" fill="url(#blue)" stroke="#1b4d68" />
        <circle cx="17.500" cy="11" r="9" fill="#e0e3ea" stroke="#555" strokeWidth="1.300" />
        <path d="M17.500 4.500 20 7.500H15ZM17.500 17.500 20 14.500H15ZM11 11 14 8.500V13.500ZM24 11 21 8.500V13.500Z" fill="#333" />
      </I>
      <I c="ml-[11px] h-7 w-7">
        <rect x="11" y="0" width="17" height="17" stroke="#333" strokeDasharray="3 2" />
        <path d="M1 25 9 17 12 19 4 27Z" fill="url(#blue)" stroke="#1b4d68" />
        <circle cx="17" cy="12" r="9" fill="#dbe7ef" stroke="#555" strokeWidth="1.300" />
      </I>
      <I c="ml-[10px] h-7 w-7">
        <Scope />
        <path d="M13 18 19 12V16H28V21H19V25Z" fill="url(#blue)" stroke="#1b4d68" />
      </I>
      <I c="ml-[10px] h-7 w-7">
        <path d="M0.500 7C2-1 26-1 27.500 7V23L20 22V8H12V24L2 27.500 0.500 26Z" fill="url(#gray)" stroke="#444" />
        <path d="M12 7C13 4 19 4 20 7V21C18 20 14 21 12 23Z" fill="#b9bcc4" />
        <path d="M2 10 11 8V24L2 27ZM20 8 27.500 7V22L20 23Z" fill="#4390b5" stroke="#1b4d68" />
        <path d="M2 17 11 9M2 24 11 16M20 14 27 8M20 21 27 14" stroke="#c8e4f0" />
      </I>
      <I c="ml-[10px] h-[30px] w-[30px]" vb="0 0 30 30">
        <Scope />
        <path d="M8 0H15L11 6H15L4 15 7 8H2Z" fill="#f8c84a" stroke="#a05a10" />
        <path d="M13 29.500V28L15 27.500 20 14.500H23L28 27.500 30 28V29.500H23V28L25 27.500 24 24H19L18 27.500 20 28V29.500ZM20 22H23L21.500 17.500Z" fill="#2a7ba5" stroke="#164f6d" strokeWidth="0.600" />
      </I>
      <I c="ml-[8px] h-7 w-7">
        <path d="M0.500 8.500 9 0.500H27.500V19L20 27.500H0.500Z" fill="#d8dbe2" stroke="#444" />
        <path d="M9 0.500V8M20 8.500 27.500 0.500M9 19H27" stroke="#444" />
        <rect x="0.500" y="8.500" width="19.500" height="19" fill="url(#blue)" stroke="#1b4d68" />
        <path d="M14 1V7M11 5 14 8 17 5M28 14H22M24 11 21 14 24 17" stroke="#222" strokeWidth="1.500" />
      </I>
      <div className="ml-[7px]"><C /></div>
      <I c="ml-[12px] h-7 w-6" vb="0 0 24 28">
        <path d="M0.500 5 14 1 24 4V22L9 27.500 0.500 23Z" fill="url(#gray)" stroke="#333" />
        <path d="M0.500 5 9 8V27.500L0.500 23Z" fill="#3f8eb3" stroke="#333" />
        <path d="M9 8 16 6V25L9 27.500Z" fill="#8fd0ea" />
        <path d="M0.500 5 9 8 24 4" stroke="#333" />
      </I>
      <div className="ml-[9px]"><C /></div>
      <I c="ml-[10px] h-7 w-7">
        <path d="M0 14C7 3 21 3 28 14 21 25 7 25 0 14Z" fill="#ececec" stroke="#555" />
        <circle cx="14" cy="13.500" r="6.500" fill="#4a4a4a" />
        <circle cx="14" cy="13.500" r="3" fill="#111" />
        <path d="M14.500 3V25" stroke="#222" strokeWidth="1.800" />
      </I>
      <div className="ml-[7px]"><C /></div>
      <div className="relative ml-[9px]">
        <Sphere />
        <svg viewBox="0 0 20 20" className="absolute top-[12px] left-[11px] h-5 w-5">
          <path d="M2 19 4 12 14 2 19 6 8 16Z" fill="#f5c337" stroke="#4a3308" />
          <path d="M14 2 19 6 17 8 12 4Z" fill="#c44" stroke="#4a3308" />
        </svg>
      </div>
      <div className="relative ml-[10px] h-[29px] w-7">
        <svg viewBox="0 0 28 17" className="absolute top-[12px] left-0 h-[17px] w-7">
          <rect width="28" height="17" fill="#222" />
          <path d="M2 2H6V6H2ZM22 2H26V6H22ZM1 11H6L4 16H0ZM10 10H14V16H9ZM18 10H22L24 16H19ZM6 6H10V10H6ZM22 6H18V10H22Z" fill="#fff" />
        </svg>
        <div className="absolute top-0 left-[3px]"><Sphere c="h-6 w-6" /></div>
      </div>
      <div className="ml-[8px]"><C /></div>
      <I c="ml-[11px] h-6 w-[26px]" vb="0 0 26 24">
        <rect x="1" y="1" width="24" height="17" fill="url(#dgray)" stroke="#333" strokeWidth="2" />
        <path d="M13 19V23M8 23H18" stroke="#333" strokeWidth="2" />
      </I>
      <div className="ml-[8px]"><C /></div>
    </div>
  );
}

function TaskPane() {
  const items = [
    <House />,
    <I>
      <path d="M2.500 4 6 5 8 1 12 3 14 0 18 3 20 0 25 4V24L10 27.500 2.500 22Z" fill="url(#gray)" stroke={DK} />
      <path d="M2.500 4 10 8V27M10 8 25 4.500M15 7V26M20 6V25" stroke={DK} />
    </I>,
    <OpenFolder />,
    <I>
      <rect x="0.500" y="2" width="27" height="24" fill="#f2f2f2" stroke={DK} />
      <path d="M3.500 5.500H14.500V11H3.500ZM17.500 5.500H24.500V11H17.500ZM6.500 14.500H11.500V18H14.500V23H3.500V18H6.500Z" fill="#fcc419" stroke={GO} />
      <path d="M17.500 26V16.500H27.500V26Z" fill="#ccc" stroke={DK} />
      <path d="M17.500 18H27.500" stroke="#777" strokeWidth="3" />
    </I>,
    <Sphere />,
    <PropList />,
  ];
  return (
    <div className="relative ml-auto mt-[7px] flex w-[39px] flex-col border-t border-l border-[#808080]">
      {items.map((ic, k) => (
        <div key={k} className="flex h-9 items-center justify-center border-b border-[#808080] bg-[#abacb0] first:h-[35px] first:bg-[#d7dbe0]">{ic}</div>
      ))}
    </div>
  );
}

function Viewport() {
  return (
    <main className="relative flex h-[871px] flex-1 flex-col bg-[#c4c8d3] pt-[6px]">
      <svg viewBox="271 205 1648 871" className="absolute inset-0 h-[871px] w-[1648px]">
        <path d="M757 764 911 830 1218 866 1319 820 1290 700H800Z" fill="#858997" filter="url(#soft)" opacity="0.650" />
        <path d="M775 770 911 838 1218 872 1312 826 1280 720H820Z" fill="#a0a4b0" filter="url(#soft2)" opacity="0.450" />
        <g stroke="#050505" strokeWidth="1.200" strokeLinejoin="round">
          <path d="M952 415.300 1107 476 1007 521 852 460Z" fill="#9a9eb4" />
          <path d="M852 460 1007 521 909 696 754 636Z" fill="#757888" />
          <path d="M1007 521 1216 732.500 909 696Z" fill="#7e8093" />
          <path d="M1107 476 1315.500 688.500 1216 732.500 1007 521Z" fill="#a1a5b9" />
          <path d="M754 636 909 696 910.700 827 755.700 766.500Z" fill="#50525d" />
          <path d="M909 696 1216 732.500 1218 863.500 910.700 827Z" fill="#646675" />
          <path d="M1216 732.500 1315.700 688.500 1318 819 1218 863.500Z" fill="#7d7f92" />
        </g>
        <path d="M331 997V970" stroke="#3fa845" strokeWidth="5" />
        <path d="M332 993V972" stroke="#7fd884" strokeWidth="2" />
        <path d="M330.500 957 337 970 330 973 324 970Z" fill="#045c08" />
        <path d="M331 998 352 1005" stroke="#c80000" strokeWidth="5" />
        <path d="M363 1009.500 354 1001.500 349 1012 352 1013Z" fill="#a80000" />
        <path d="M363 1009.500 355 1001 352 1006Z" fill="#ff6b60" />
        <path d="M331 997.500 312 1005" stroke="#0a0aa0" strokeWidth="5" />
        <path d="M300 1011 308 1001.500 314 1008 310 1014Z" fill="#0808b0" />
        <g fontFamily="Open Sans" fontSize="12.500" textAnchor="middle">
          <text x="331.500" y="950" fill="#2f9a3b">Y</text>
          <text x="370.500" y="1013.500" fill="#f0413c">X</text>
          <text x="295.500" y="1014" fill="#3535e0">Z</text>
        </g>
      </svg>
      <HeadsUp />
      <TaskPane />
    </main>
  );
}

function BottomTabs() {
  return (
    <div className="flex h-[26px] border-t border-b border-[#808080] bg-[#d7dbe0] text-[17px]">
      <div className="ml-[2px] flex w-[97px] shrink-0 border-t border-t-black bg-[#8f92ad]">
        {["M3 0V12M11 0V12L5 6Z", "M10 0V12L3 6Z", "M3 0V12L10 6Z", "M11 0V12M3 0V12L9 6Z"].map((d) => (
          <div key={d} className="mr-px flex w-[23px] items-center justify-center border border-[#9093ad] bg-[#aeb0c2]">
            <svg viewBox="0 0 14 12" className="h-3 w-[14px]"><path d={d} fill="#7b7d96" stroke="#7b7d96" /></svg>
          </div>
        ))}
      </div>
      <div className="flex w-[87px] items-center pl-[18px] font-bold"><T w={57}>Model</T></div>
      <div className="flex w-[103px] items-center border-l border-[#808080] bg-[#abacb0] pl-[12px] text-[#222]"><T w={78}>3D Views</T></div>
      <div className="flex w-[172px] items-center border-r border-l border-[#808080] bg-[#abacb0] pl-[16px] text-[#222]"><T w={128}>Motion Study 1</T></div>
    </div>
  );
}

function StatusBar() {
  return (
    <div className="flex h-[28px] items-center overflow-hidden border-b-2 border-[#b4b5b9] bg-[#d7dbe0] pl-[1px] text-[17px]">
      <T w={282} c="mt-[6px]">SOLIDWORKS Premium 2024 SP0.1</T>
      <T w={91} c="mt-[6px] ml-[1274px]">Editing Part</T>
      <T w={55} c="mt-[6px] ml-[125px]">MMGS</T>
      <svg viewBox="0 0 6 3" className="ml-[25px] h-[3px] w-[6px]"><path d="M0 3H6L3 0Z" fill="#333" /></svg>
      <svg viewBox="0 0 28 24" className="ml-[28px] h-6 w-7" fill="none" stroke="#444">
        <path d="M1 1H10L27.500 13V15L18 26 1 14Z" fill="#fff" />
        <path d="M1 11 17 22 27 12" stroke="#666" />
        <circle cx="6.500" cy="5.500" r="3" fill="#ccc" />
        <path d="M12 5 8 12M16 8 12 15M20 11 16 18" strokeWidth="1.500" />
      </svg>
    </div>
  );
}

/* ---------- taskbar ---------- */
function Taskbar() {
  const dot = <div className="absolute top-[58px] left-1/2 h-[5px] w-[8px] -translate-x-1/2 rounded-full bg-[#7d7d80]" />;
  return (
    <footer className="flex h-[70px] items-center bg-[linear-gradient(90deg,#e8ded5_0%,#e5dcd8_8%,#dfdcde_20%,#dcdbe4_28%,#dbd9e5_45%,#dcdbe2_58%,#dbdbe6_68%,#d9deeb_79%,#dddbe4_87%,#e0d8da_93%,#e7dbc9_100%)]">
      <svg viewBox="0 0 35 35" className="-mt-px ml-[576px] h-[35px] w-[35px] shrink-0">
        <path d="M1 0H16.800V16.800H0V1ZM18.200 0H34L35 1V16.800H18.200ZM0 18.200H16.800V35H1L0 34ZM18.200 18.200H35V34L34 35H18.200Z" fill="url(#win)" />
      </svg>
      <div className="-mt-px ml-[22px] flex h-[47px] w-[326px] shrink-0 items-center overflow-hidden rounded-full border border-b-2 border-[#c6c4cf] bg-[#f3f2f7]">
        <svg viewBox="0 0 22 22" className="ml-[15px] h-[22px] w-[22px] shrink-0" fill="none" stroke="#2a2a2a" strokeWidth="2.200">
          <circle cx="9.500" cy="9.500" r="8" />
          <path d="M15 15.500 20.500 21" strokeWidth="3" />
        </svg>
        <T w={37} c="ml-[16px] text-[17.500px] text-[#5f5f63]">Cari</T>
        <svg viewBox="0 0 64 38" className="mt-[4px] ml-[161px] h-[38px] w-16 shrink-0 overflow-visible">
          <ellipse cx="14" cy="17" rx="9" ry="11" fill="#7a78dd" opacity="0.600" filter="url(#soft)" />
          <ellipse cx="46" cy="15" rx="14" ry="12" fill="#2bb39c" opacity="0.850" filter="url(#soft)" />
          <ellipse cx="28" cy="19" rx="12" ry="9" fill="#e8c65a" opacity="0.900" filter="url(#soft)" />
          <path d="M38 24l8-4 4 8-10 4Z" fill="#f2803a" />
          <path d="M2 37Q6 30 14 27L24 22 34 27 42 31 54 24Q62 28 63 37L60 38H6Z" fill="#1b2c72" />
          <path d="M2 37 20 30 40 35 63 31V37L60 38H6Z" fill="#1a1158" />
          <path d="M11 18 14 19M13 12 16 14M20 7 21 10M29 7V10M34 11 36 14M42 7V11M50 10 47 14M55 18 50 19M40 19 37 21M31 16 28 17" stroke="#fff3c9" strokeWidth="1.500" />
        </svg>
      </div>
      <svg viewBox="0 0 36 34" className="ml-[20px] h-[34px] w-9 shrink-0">
        <rect x="0" y="9" width="27" height="25" rx="1.500" fill="url(#dark)" />
        <rect x="9" y="0" width="27" height="24" rx="1.500" fill="#f6f6f6" opacity="0.950" />
        <path d="M9 9H27V24H10L9 23Z" fill="#a3a3a3" />
      </svg>
      <svg viewBox="0 0 36 28" className="-mt-[2px] ml-[30px] h-7 w-9 shrink-0">
        <rect width="36" height="28" rx="2" fill="#0f5fb4" />
        <path d="M0 10H3L8 5H11L17 13 24 5H28L32 10H36V26H0Z" fill="#2f95e2" />
        <path d="M0 10H4L8 17H11L17 12 20 18 23 20H26L31 10H36V26L34 28H2L0 26Z" fill="url(#sea)" />
        <path d="M0 9H2L7 17 11 5 14 9 18 18 23 7 26 6 30 15 33 9H36V0H0Z" fill="#0f5fb4" opacity="0.650" />
      </svg>
      <svg viewBox="0 0 37 33" className="-mt-px ml-[30px] h-[33px] w-[37px] shrink-0">
        <path d="M0 2 1 0H12L15 3V10H0Z" fill="#dc9a07" />
        <path d="M0 6H14L17 3H36L37 4V32L36 33H1L0 32Z" fill="url(#fold)" />
        <path d="M6 33V27Q6 22 11 22H26Q31 22 31 27V33Z" fill="#1370c8" />
        <path d="M12 27H25" stroke="#0a4d95" strokeWidth="2" strokeLinecap="round" />
      </svg>
      <div className="relative ml-[29px] h-[70px] w-[36px] shrink-0 pt-[16px]">
        <svg viewBox="0 0 36 36" className="h-9 w-9">
          <circle cx="18" cy="18" r="18" fill="url(#edgeB)" />
          <path d="M0.500 15C3 5 10 0 18 0 28 0 36 7 36 15 36 21 31 24 26 24 21 24 20 22 21 20 24 15 18 9 12 10 6 10 2 13 0.500 15Z" fill="url(#edgeA)" />
          <path d="M22 19C20 23 22 29 34 26 31 31 26 34 21 33 12 31 12 19 19 14 21 14 23 16 22 19Z" fill="#123f86" />
          <path d="M21 18C20 22 23 26 29 25 33 24 36 22 36 18V27H34C26 30 18 26 21 18Z" fill="#dddce2" />
        </svg>
        {dot}
      </div>
      <div className="relative ml-[30px] h-[70px] w-9 shrink-0 pt-[16px]">
        <svg viewBox="0 0 36 36" className="h-9 w-9">
          <circle cx="18" cy="18" r="18" fill="#fbc21c" />
          <path d="M18 18 2.500 9A18 18 0 0 1 33.600 9H18Z" fill="#e23b2e" />
          <path d="M18 18 26 22 18 36A18 18 0 0 1 2.400 9Z" fill="#2a9e4b" />
          <path d="M18 9H33.600A18 18 0 0 1 18 36L26 22Z" fill="#fbc21c" />
          <circle cx="18" cy="18" r="8.500" fill="#fff" />
          <circle cx="18" cy="18" r="6.800" fill="#2f76e8" />
        </svg>
        <svg viewBox="0 0 24 24" className="absolute top-[9px] left-5 h-6 w-6">
          <circle cx="12" cy="12" r="12" fill="#5c5550" />
          <path d="M8 8Q8 3 12.500 3 17 3 16 9L20 14 19 21Q13 25 7 21L6 14Z" fill="#17181c" />
          <circle cx="12" cy="8.500" r="2.500" fill="#8a6a58" />
        </svg>
        {dot}
      </div>
      <div className="relative ml-[20px] h-[58px] w-14 shrink-0 rounded-[5px] border border-b-2 border-[#d3d1d8] bg-[#f1eff4] pt-[9px]">
        <svg viewBox="0 0 36 36" className="ml-[9px] h-9 w-9" strokeLinejoin="round">
          <path d="M1 7 18 0 35 6V27L18 36 1 28Z" fill="#b00d12" />
          <path d="M1 7 18 0 35 6 18 12Z" fill="#e8262b" />
          <path d="M18 12 35 6V27L18 36Z" fill="#8d0a0e" />
          <path d="M1 7 18 12V36L1 28Z" fill="#c41217" stroke="#6a0508" strokeWidth="0.500" />
          <text x="3.500" y="25" fontFamily="Open Sans" fontSize="19" fontWeight="800" fill="#fff" textLength="12" lengthAdjust="spacingAndGlyphs">S</text>
          <text x="19" y="24" fontFamily="Open Sans" fontSize="18" fontWeight="800" fill="#fff" textLength="14" lengthAdjust="spacingAndGlyphs">W</text>
          <text x="13" y="35" fontFamily="Open Sans" fontSize="10.500" fontWeight="800" fill="#fff" stroke="#000" strokeWidth="3" paintOrder="stroke" textLength="22" lengthAdjust="spacingAndGlyphs">2024</text>
        </svg>
        <div className="absolute top-[51px] left-[15px] h-[5px] w-6 rounded-full bg-[#0a75d2]" />
      </div>
      <svg viewBox="0 0 16 9" className="-mt-px ml-[164px] h-[9px] w-4 shrink-0" fill="none" stroke="#222" strokeWidth="1.800">
        <path d="M0.500 8.500 8 1 15.500 8.500" />
      </svg>
      <svg viewBox="0 0 25 20" className="ml-[28px] h-5 w-[25px] shrink-0" stroke="#222" strokeWidth="1.500">
        <path d="M6 17A5 5 0 0 1 5 7C7 1 15 0 18 6 24 6 26 15 19 17Z" fill="#cfcfcf" />
        <path d="M5 7C7 1 15 0 18 6L12 10Z" fill="#999" stroke="none" />
        <path d="M4 1 22 19.500" />
      </svg>
      <T w={32} c="ml-[28px] text-[15.500px] text-[#222]">IND</T>
      <svg viewBox="0 0 24 18" className="-mt-px ml-[29px] h-[18px] w-6 shrink-0" fill="none" stroke="#222" strokeWidth="1.600">
        <path d="M0.500 6Q12-4 23.500 6" stroke="#b9b7c0" />
        <path d="M3.500 9Q12 1 20.500 9M7 12Q12 7.500 17 12" />
        <circle cx="12" cy="15" r="1.600" fill="#222" />
      </svg>
      <svg viewBox="0 0 25 20" className="-mt-px ml-[12px] h-5 w-[25px] shrink-0" fill="none" stroke="#222" strokeWidth="1.500">
        <path d="M1 7H5L11 1.500V18.500L5 13H1Z" />
        <path d="M14 7Q16 10 14 13M17 4Q21.500 10 17 16M20 1.500Q27 10 20 18.500" />
      </svg>
      <svg viewBox="0 0 25 20" className="-mt-[5px] ml-[11px] h-5 w-[25px] shrink-0 overflow-visible" fill="none" stroke="#222" strokeWidth="1.600">
        <path d="M8 4.500H20L21.500 6V17L20 18.500H3L1.500 17V11" />
        <path d="M5 7H19V16H4V11L6 11 9 7Z" fill="#222" stroke="none" />
        <path d="M22 9H24.500V14H22Z" fill="#222" stroke="none" />
        <path d="M5-1 0 6H3L2 11 8 4H5Z" fill="#222" stroke="none" />
      </svg>
      <div className="-mt-[2px] mr-[29px] ml-auto flex flex-col items-end text-[16px] leading-6 text-[#222]">
        <T w={44} c="h-6">03.43</T>
        <T w={93} c="h-6">27/09/2025</T>
      </div>
    </footer>
  );
}

export default function App() {
  return (
    <div className="flex h-[1200px] w-[1920px] flex-col overflow-hidden bg-[#d7dbe0] font-['Open_Sans','Noto_Sans',sans-serif] text-[15.800px] leading-[22px] text-black">
      <Defs />
      <TitleBar />
      <Ribbon />
      <TabRow />
      <div className="flex h-[871px] shrink-0 border-r border-[#f5f6f8]">
        <TreePanel />
        <Viewport />
      </div>
      <BottomTabs />
      <StatusBar />
      <Taskbar />
    </div>
  );
}
